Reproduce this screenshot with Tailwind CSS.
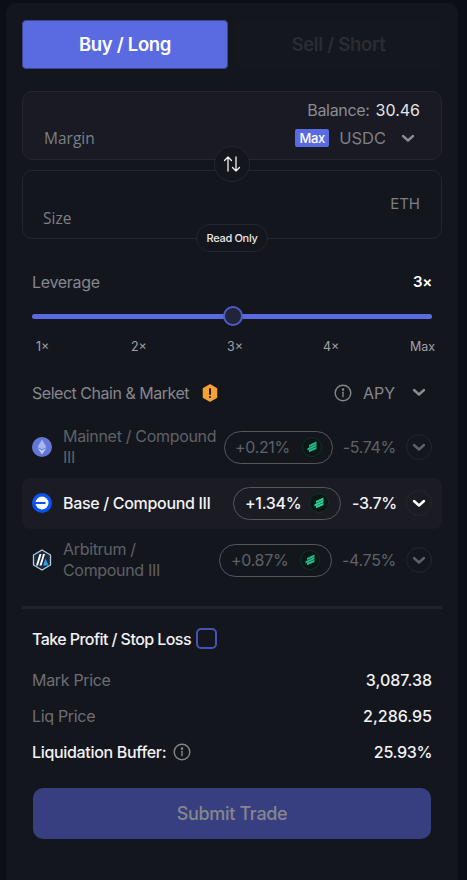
<!DOCTYPE html>
<html lang="en">
  <head>
    <meta charset="UTF-8" />
    <meta name="viewport" content="width=device-width, initial-scale=1.0" />
    <title>Trade</title>
    <script src="https://cdn.jsdelivr.net/npm/@tailwindcss/browser@4"></script>
  </head>
  <body class="bg-[#0c0e15] font-['Inter',sans-serif] tracking-[-0.02em]">
    <div class="w-[467px] h-[880px] overflow-hidden pt-[3px] pl-[6px]">
      <div class="w-[452px] h-[877px] rounded-t-[10px] bg-[#14161e] px-[16px] pt-[17px]">
        <!-- buy / sell tabs -->
        <div class="flex h-[49px] text-[18.5px] font-semibold">
          <div class="w-[206px] rounded-[4px] bg-[#5a6be2] border border-[#3b4690] text-white flex items-center justify-center">Buy / Long</div>
          <div class="flex-1 ml-[7px] bg-[#15171f] flex items-center justify-center text-[#2a2c34]">Sell / Short</div>
        </div>

        <!-- margin -->
        <div class="relative mt-[22px] h-[69px] rounded-[10px] border border-[#23252f] bg-[#191a23] px-[21px]">
          <div class="flex justify-end items-center pt-[7px] text-[16px] h-[29px] text-[#8a8c92]">
            Balance:<span class="ml-[6px] tracking-normal text-[#e6e6e8]">30.46</span>
          </div>
          <div class="flex items-center justify-between mt-[5px]">
            <span class="text-[15.5px] text-[#7d7f85] tracking-normal font-['Open_Sans',sans-serif]">Margin</span>
            <div class="flex items-center">
              <span class="w-[34px] h-[18px] rounded-[2px] bg-[#5a6be2] text-white text-[13px] font-medium flex items-center justify-center">Max</span>
              <span class="ml-[10px] text-[16.5px] text-[#7d7f85] tracking-normal">USDC</span>
              <svg class="ml-[15px] mr-[5px]" width="14" height="9" viewBox="0 0 14 9" fill="none" stroke="#8a8c92" stroke-width="2.4" stroke-linecap="round" stroke-linejoin="round"><path d="M2 2l5 4.5L12 2" /></svg>
            </div>
          </div>
          <div class="absolute left-[191px] top-[54px] z-10 w-[36px] h-[36px] rounded-full border border-[#23252f] bg-[#14161e] flex items-center justify-center">
            <svg width="20" height="20" viewBox="0 0 20 20" fill="none" stroke="#f2f2f4" stroke-width="1.3" stroke-linecap="round" stroke-linejoin="round"><path d="M6 17V3M2.5 6.5L6 3l3.5 3.5M14 3v14M10.5 13.5L14 17l3.5-3.5" /></svg>
          </div>
        </div>

        <!-- size -->
        <div class="relative mt-[10px] h-[69px] rounded-[10px] border border-[#23252f] px-[21px]">
          <div class="flex justify-end pt-[22px] text-[15px] text-[#7d7f85] tracking-normal">ETH</div>
          <span class="absolute left-[20px] top-[36px] text-[15.5px] text-[#7d7f85] tracking-normal font-['Open_Sans',sans-serif]">Size</span>
          <div class="absolute left-[173px] top-[53px] h-[28px] w-[72px] rounded-full border border-[#23252f] bg-[#14161e] text-[11px] font-medium text-[#e8e8ea] flex items-center justify-center">Read Only</div>
        </div>

        <!-- leverage -->
        <div class="px-[10px] mt-[33px]">
          <div class="flex justify-between items-center h-[20px]">
            <span class="text-[16px] text-[#85878d]">Leverage</span>
            <span class="text-[15px] font-semibold text-white">3×</span>
          </div>
          <div class="relative h-[5px] mt-[22px] rounded-full bg-[#5a6be2]">
            <div class="absolute left-[191px] top-[-8px] w-[20px] h-[20px] rounded-full border-2 border-[#4c5bc8] bg-[#22243a]"></div>
          </div>
          <div class="flex mt-[19px] text-[12.5px] text-[#a0a2a8] tracking-normal pl-[4px] -mr-[4px]">
            <span class="w-[95px] shrink-0">1×</span><span class="w-[96px] shrink-0">2×</span><span class="w-[96px] shrink-0">3×</span><span class="w-[87px] shrink-0">4×</span><span class="shrink-0">Max</span>
          </div>
        </div>

        <!-- chain and market -->
        <div class="flex items-center px-[10px] mt-[24px] h-[24px] text-[16px] text-[#85878d]">
          <span class="tracking-[-0.03em]">Select Chain &amp; Market</span>
          <svg class="ml-[13px]" width="16" height="18" viewBox="0 0 16 18"><path d="M8 1l6.5 3.7v8.6L8 17l-6.5-3.7V4.7z" fill="#f7a035" stroke="#f7a035" stroke-width="1.5" stroke-linejoin="round" /><path d="M8 5v5" stroke="#14161e" stroke-width="1.8" stroke-linecap="round" /><circle cx="8" cy="13" r="1" fill="#14161e" /></svg>
          <svg class="ml-auto" width="18" height="18" viewBox="0 0 18 18" fill="none" stroke="#85878d" stroke-width="1.4"><circle cx="9" cy="9" r="7.8" /><path d="M9 8.2v4.6" stroke-linecap="round" /><circle cx="9" cy="5.6" r="0.6" fill="#85878d" /></svg>
          <span class="ml-[11px] tracking-normal">APY</span>
          <svg class="ml-[17px] mr-[6px]" width="14" height="9" viewBox="0 0 14 9" fill="none" stroke="#8a8c92" stroke-width="2.4" stroke-linecap="round" stroke-linejoin="round"><path d="M2 2l5 4.5L12 2" /></svg>
        </div>

        <!-- rows -->
        <div class="mt-[17px] flex flex-col">
          <div class="flex items-center h-[51px] px-[10px] text-[#5f6167] text-[16px]">
            <svg width="20" height="20" viewBox="0 0 20 20" class="shrink-0"><circle cx="10" cy="10" r="10" fill="#6278d8" /><path d="M10 2.5l4.5 7.5L10 12.5 5.5 10z" fill="#a9b5ec" /><path d="M10 13.5l4.5-2.6L10 17.5l-4.5-6.6z" fill="#c5cdf3" /></svg>
            <span class="ml-[11px] w-[161px] leading-[21px] shrink-0">Mainnet / Compound III</span>
            <div class="flex items-center justify-between w-[109px] h-[33px] rounded-full border border-[#55575d] pl-[10px] pr-[10px]">
              <span>+0.21%</span>
              <svg width="20" height="20" viewBox="0 0 20 20"><circle cx="10" cy="10" r="9.5" fill="#0b1714" stroke="#13302a" /><path d="M7 7.9l7.5-3.4v2.2L7 10.1zM5.5 11.2l9-4.1v2.2l-9 4.1zM7 13.1l7.5-3.4v2.2L7 15.300z" fill="#25b98c" /></svg>
            </div>
            <span class="ml-auto">-5.74%</span>
            <div class="ml-[10px] w-[26px] h-[26px] rounded-full border border-[#24262f] flex items-center justify-center">
              <svg width="14" height="9" viewBox="0 0 14 9" fill="none" stroke="#5f6167" stroke-width="2.4" stroke-linecap="round" stroke-linejoin="round"><path d="M2 2l5 4.5L12 2" /></svg>
            </div>
          </div>

          <div class="flex items-center h-[51px] mt-[5px] rounded-[8px] bg-[#1a1b23] px-[10px] text-[#f2f2f4] text-[16px] font-medium">
            <svg width="20" height="20" viewBox="0 0 20 20" class="shrink-0"><circle cx="10" cy="10" r="10" fill="#0b53f2" /><circle cx="10" cy="10" r="6.5" fill="#fff" /><rect x="2.5" y="9" width="11" height="2" fill="#0b53f2" /></svg>
            <span class="ml-[11px] shrink-0">Base / Compound III</span>
            <div class="ml-auto flex items-center justify-between w-[108px] h-[33px] rounded-full border border-[#55575d] pl-[11px] pr-[11px]">
              <span>+1.34%</span>
              <svg width="20" height="20" viewBox="0 0 20 20"><circle cx="10" cy="10" r="9.5" fill="#0b1714" stroke="#13302a" /><path d="M7 7.9l7.5-3.4v2.2L7 10.1zM5.5 11.2l9-4.1v2.2l-9 4.1zM7 13.1l7.5-3.4v2.2L7 15.300z" fill="#2fd3a0" /></svg>
            </div>
            <span class="ml-[11px] w-[44px] text-right">-3.7%</span>
            <div class="ml-[10px] w-[26px] h-[26px] rounded-full border border-[#24262f] flex items-center justify-center">
              <svg width="14" height="9" viewBox="0 0 14 9" fill="none" stroke="#fff" stroke-width="2.4" stroke-linecap="round" stroke-linejoin="round"><path d="M2 2l5 4.5L12 2" /></svg>
            </div>
          </div>

          <div class="flex items-center h-[51px] mt-[6px] px-[10px] text-[#5f6167] text-[16px]">
            <svg width="20" height="22" viewBox="0 0 20 22" class="shrink-0"><path d="M10 1l8.5 5v10L10 21l-8.5-5V6z" fill="#1b2a3c" stroke="#b5cde0" stroke-width="1.3" /><path d="M7.5 5h2L6 16.5H4zM11 5h2L9.5 16.5h-2z" fill="#fff" /><path d="M13.5 9.5l3 7h-5.5z" fill="#28a0f0" /></svg>
            <span class="ml-[11px] w-[156px] leading-[21px] shrink-0">Arbitrum /<br />Compound III</span>
            <div class="flex items-center justify-between w-[113px] h-[33px] rounded-full border border-[#55575d] pl-[11px] pr-[11px]">
              <span>+0.87%</span>
              <svg width="20" height="20" viewBox="0 0 20 20"><circle cx="10" cy="10" r="9.5" fill="#0b1714" stroke="#13302a" /><path d="M7 7.9l7.5-3.4v2.2L7 10.1zM5.5 11.2l9-4.1v2.2l-9 4.1zM7 13.1l7.5-3.4v2.2L7 15.300z" fill="#25b98c" /></svg>
            </div>
            <span class="ml-auto">-4.75%</span>
            <div class="ml-[10px] w-[26px] h-[26px] rounded-full border border-[#24262f] flex items-center justify-center">
              <svg width="14" height="9" viewBox="0 0 14 9" fill="none" stroke="#5f6167" stroke-width="2.4" stroke-linecap="round" stroke-linejoin="round"><path d="M2 2l5 4.5L12 2" /></svg>
            </div>
          </div>
        </div>

        <div class="mt-[20px] h-[3px] bg-[#20222c]"></div>

        <!-- summary -->
        <div class="px-[10px]">
          <div class="flex items-center mt-[19px] h-[22px] text-[16px] font-medium text-[#f2f2f4] tracking-[-0.035em]">
            Take Profit / Stop Loss
            <div class="ml-[5px] w-[21px] h-[21px] rounded-[5px] border-2 border-[#4453b4]"></div>
          </div>
          <div class="flex justify-between items-center mt-[19px] h-[22px] text-[16px]">
            <span class="text-[#6c6e74]">Mark Price</span><span class="text-[#f2f2f4] font-medium tracking-normal">3,087.38</span>
          </div>
          <div class="flex justify-between items-center mt-[14px] h-[22px] text-[16px]">
            <span class="text-[#6c6e74]">Liq Price</span><span class="text-[#f2f2f4] font-medium tracking-normal">2,286.95</span>
          </div>
          <div class="flex items-center mt-[14px] h-[22px] text-[16px] font-medium text-[#f2f2f4]">
            Liquidation Buffer:
            <svg class="ml-[7px]" width="18" height="18" viewBox="0 0 18 18" fill="none" stroke="#85878d" stroke-width="1.4"><circle cx="9" cy="9" r="7.8" /><path d="M9 8.2v4.6" stroke-linecap="round" /><circle cx="9" cy="5.6" r="0.6" fill="#85878d" /></svg>
            <span class="ml-auto">25.93%</span>
          </div>
          <div class="mt-[25px] h-[51px] mx-[1px] rounded-[10px] bg-[#373f80] text-[18px] font-medium text-[#85878d] flex items-center justify-center">Submit Trade</div>
        </div>
      </div>
    </div>
  </body>
</html>
